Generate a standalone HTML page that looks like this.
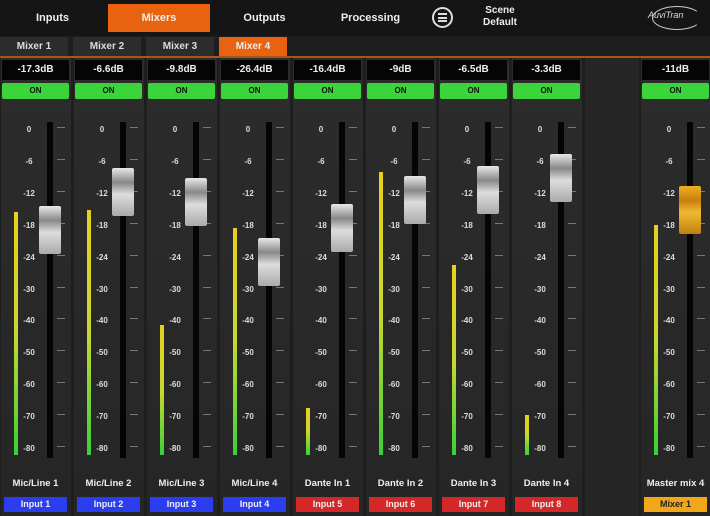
<!DOCTYPE html>
<html><head><meta charset="utf-8"><style>
*{margin:0;padding:0;box-sizing:border-box}
body{width:710px;height:516px;overflow:hidden;background:#1e1e1e;font-family:"Liberation Sans",sans-serif;position:relative;color:#eee}
.a{position:absolute}
.hdr{left:0;top:0;width:710px;height:36px;background:#151515}
.tab{top:6px;height:24px;font-size:11px;font-weight:bold;text-align:center;line-height:24px;color:#eee}
.sub{top:37px;height:19px;font-size:10px;font-weight:bold;text-align:center;line-height:19px;background:#2c2c2c;color:#ddd}
.strip{top:58px;width:70px;height:458px;background:linear-gradient(#2c2c2c,#262626)}
.db{height:20px;background:#050505;color:#eee;font-size:10px;font-weight:bold;text-align:center;line-height:20px}
.on{height:16px;background:#3bd43b;border-radius:2px;color:#111;font-size:8px;font-weight:bold;text-align:center;line-height:16px}
.lbl{font-size:9.5px;font-weight:bold;color:#eee;text-align:center;width:73px}
.btn{height:15px;font-size:9px;font-weight:bold;text-align:center;line-height:15px;color:#eee}
.sc{font-size:8px;font-weight:bold;color:#ddd;width:20px;text-align:center}
.tk{width:8px;height:1px;background:#777}
</style></head><body>
<div class="a hdr"></div>
<div class="a tab" style="left:10px;width:85px">Inputs</div>
<div class="a tab" style="left:108px;width:102px;background:#e8620f;top:4px;height:28px;line-height:28px">Mixers</div>
<div class="a tab" style="left:222px;width:85px">Outputs</div>
<div class="a tab" style="left:328px;width:85px">Processing</div>
<div class="a" style="left:432px;top:7px;width:21px;height:21px;border:2px solid #ddd;border-radius:50%"></div>
<div class="a" style="left:438px;top:13px;width:9px;height:9px;border-top:2px solid #ddd;border-bottom:2px solid #ddd"></div>
<div class="a" style="left:438px;top:16.5px;width:9px;height:2px;background:#ddd"></div>
<div class="a" style="left:480px;top:5px;font-size:10px;font-weight:bold;line-height:12px;width:40px;text-align:center">Scene<br>Default</div>
<div class="a" style="left:648px;top:10px;font-size:9px;color:#ddd;font-style:italic">AuviTran</div>
<div class="a" style="left:652px;top:6px;width:50px;height:24px;border:1.5px solid #ccc;border-radius:50%;border-right-color:transparent"></div>
<div class="a sub" style="left:0;width:68px">Mixer 1</div>
<div class="a sub" style="left:73px;width:68px">Mixer 2</div>
<div class="a sub" style="left:146px;width:68px">Mixer 3</div>
<div class="a sub" style="left:219px;width:68px;background:#e8620f;color:#eee">Mixer 4</div>
<div class="a" style="left:0;top:56px;width:710px;height:2px;background:#a8551c"></div>
<div id="c"></div>
<script>
var d=[["-17.3dB",230,212,"Mic/Line 1","Input 1","#2a3ef0"],["-6.6dB",192,210,"Mic/Line 2","Input 2","#2a3ef0"],["-9.8dB",202,325,"Mic/Line 3","Input 3","#2a3ef0"],["-26.4dB",262,228,"Mic/Line 4","Input 4","#2a3ef0"],["-16.4dB",228,408,"Dante In 1","Input 5","#d42828"],["-9dB",200,172,"Dante In 2","Input 6","#d42828"],["-6.5dB",190,265,"Dante In 3","Input 7","#d42828"],["-3.3dB",178,415,"Dante In 4","Input 8","#d42828"]];
var sc=["0","-6","-12","-18","-24","-30","-40","-50","-60","-70","-80"];
var h="";
function strip(x,v,hy,mt,l,b,bc,m){
 h+='<div class="a strip" style="left:'+(x+1)+'px"></div>';
 h+='<div class="a db" style="left:'+(x+2)+'px;top:60px;width:67px">'+v+'</div>';
 h+='<div class="a on" style="left:'+(x+2)+'px;top:83px;width:67px">ON</div>';
 h+='<div class="a" style="left:'+(x+14)+'px;top:'+mt+'px;width:4px;height:'+(455-mt)+'px;background:linear-gradient(#e8d020,#c8d830 50%,#3ad03a)"></div>';
 for(var i=0;i<11;i++){var y=130+i*31.9;h+='<div class="a sc" style="left:'+(x+19)+'px;top:'+(y-5)+'px">'+sc[i]+'</div>';h+='<div class="a tk" style="left:'+(x+57)+'px;top:'+(y-3)+'px"></div>';}
 h+='<div class="a" style="left:'+(x+47)+'px;top:122px;width:6px;height:336px;background:#050505"></div>';
 var g=m?'linear-gradient(#f0b020,#c88010 30%,#f0b830 55%,#c08010)':'linear-gradient(#e8e8e8,#888 30%,#ddd 55%,#aaa)';
 h+='<div class="a" style="left:'+(x+39)+'px;top:'+(hy-24)+'px;width:22px;height:48px;background:'+g+';border-radius:2px"></div>';
 h+='<div class="a lbl" style="left:'+(x-1)+'px;top:478px">'+l+'</div>';
 h+='<div class="a btn" style="left:'+(x+4)+'px;top:497px;width:63px;background:'+bc+';color:'+(m?'#222':'#eee')+'">'+b+'</div>';
}
for(var i=0;i<8;i++){var s=d[i];strip(i*73,s[0],s[1],s[2],s[3],s[4],s[5]);}
h+='<div class="a" style="left:585px;top:58px;width:54px;height:458px;background:#262626"></div>';
strip(640,"-11dB",210,225,"Master mix 4","Mixer 1","#f0a818",1);
document.getElementById("c").innerHTML=h;
</script>
</body></html>
